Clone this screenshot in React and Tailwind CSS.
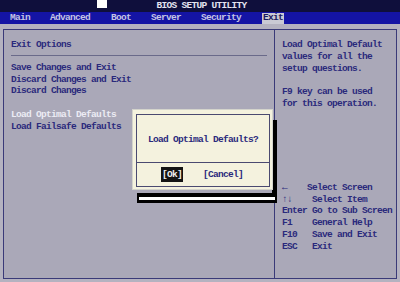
const mono = "font-['Liberation_Mono',monospace] font-bold text-[9.5px] tracking-[-0.7px]";

const menu = [
  { label: "Main", w: "w-[40px]" },
  { label: "Advanced", w: "w-[61px]" },
  { label: "Boot", w: "w-[40px]" },
  { label: "Server", w: "w-[50px]" },
  { label: "Security", w: "w-[61px]" },
];

const keys = [
  "←    Select Screen",
  "↑↓    Select Item",
  "Enter Go to Sub Screen",
  "F1    General Help",
  "F10   Save and Exit",
  "ESC   Exit",
];

const App = () => {
  return (
    <div className={`relative w-[400px] h-[282px] overflow-hidden bg-[#b4b2c0] ${mono} leading-[11.8px]`}>
      {/* title bar */}
      <div className="relative h-[12px] bg-[#0f0f3c] flex items-center justify-center">
        <div className="absolute left-[97px] top-0 w-[10px] h-[8px] bg-white" />
        <span className="ml-[3px] text-[#e4e4f0]">BIOS SETUP UTILITY</span>
      </div>

      {/* menu bar */}
      <div className="h-[12px] bg-[#1414a4] flex items-center pl-[10px] text-[#c4c4e4]">
        {menu.map((m) => (
          <span key={m.label} className={m.w}>
            {m.label}
          </span>
        ))}
        <span className="bg-[#cacad4] text-[#1a1a60] px-[1px] h-[11px] flex items-center">Exit</span>
      </div>

      {/* main frame */}
      <div className="mt-[5px] ml-[3px] w-[394px] h-[250px] border border-[#3a3a78] bg-[#aaa8b8] flex text-[#2a2a7c]">
        <div className="w-[271px] border-r border-[#3a3a78] pt-[9px] pl-[7px] pr-[7px]">
          <div>Exit Options</div>
          <div className="mt-[4px] h-px bg-[#6a6a8a]" />
          <div className="mt-[6px]">Save Changes and Exit</div>
          <div>Discard Changes and Exit</div>
          <div>Discard Changes</div>
          <div className="h-[11.8px]" />
          <div className="text-[#ececf4]">Load Optimal Defaults</div>
          <div>Load Failsafe Defaults</div>
        </div>
        <div className="flex-1 pt-[9px] pl-[7px]">
          <div>Load Optimal Default</div>
          <div>values for all the</div>
          <div>setup questions.</div>
          <div className="h-[11.8px]" />
          <div>F9 key can be used</div>
          <div>for this operation.</div>
          <div className="mt-[72px] whitespace-pre">
            {keys.map((k) => (
              <div key={k}>{k}</div>
            ))}
          </div>
        </div>
      </div>

      {/* dialog shadow */}
      <div className="absolute left-[272px] top-[120px] w-[5px] h-[83px] bg-black" />
      <div className="absolute left-[137px] top-[193px] w-[140px] h-[10px] bg-black flex items-center px-[2px]">
        <div className="w-full h-[3px] bg-white" />
      </div>

      {/* dialog */}
      <div className="absolute left-[132px] top-[109px] w-[141px] h-[81px] bg-[#f4f2de] border border-[#d4d4cc] pt-[4px] pl-[3px] pr-[2px] pb-[2px]">
        <div className="h-full border border-[#4a4a70] flex flex-col text-[#2a2a7c]">
          <div className="h-[47px] flex items-center justify-center pt-[2px]">Load Optimal Defaults?</div>
          <div className="h-px bg-[#4a4a70]" />
          <div className="flex-1 flex items-center pl-[24px]">
            <span className="bg-[#141414] text-[#f0f0f0] px-[1px] py-[2px]">[Ok]</span>
            <span className="ml-[20px]">[Cancel]</span>
          </div>
        </div>
      </div>
    </div>
  );
};

export default App;
